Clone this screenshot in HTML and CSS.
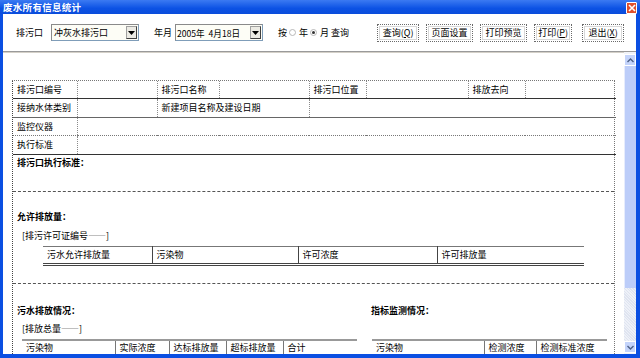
FILE: index.html
```html
<!DOCTYPE html>
<html lang="zh">
<head>
    <meta charset="UTF-8">
    <title>废水所有信息统计</title>
    <link rel="stylesheet" href="styles.css">
</head>
<body>
<div class="window">
    <div class="titlebar">
        <span class="title">废水所有信息统计</span>
        <span class="close">
            <svg width="8" height="8" viewBox="0 0 8 8"><path d="M1 1L7 7M7 1L1 7" stroke="#fff" stroke-width="1.6"/></svg>
        </span>
    </div>

    <div class="toolbar">
        <span class="lbl">排污口</span>
        <div class="combo outlet">
            <span class="val">冲灰水排污口</span>
            <span class="drop"><svg width="7" height="4" viewBox="0 0 7 4"><path d="M0 0H7L3.5 4Z" fill="#000"/></svg></span>
        </div>
        <span class="lbl ym">年月</span>
        <div class="combo date">
            <span class="val">2005年&nbsp; 4月18日</span>
            <span class="drop"><svg width="7" height="4" viewBox="0 0 7 4"><path d="M0 0H7L3.5 4Z" fill="#000"/></svg></span>
        </div>
        <span class="by">按<span class="radio"></span>年<span class="radio on"></span>月&nbsp;查询</span>
        <div class="buttons">
            <span class="btn b-query">查询(<u>Q</u>)</span>
            <span class="btn b-wide">页面设置</span>
            <span class="btn b-wide">打印预览</span>
            <span class="btn b-print">打印(<u>P</u>)</span>
            <span class="btn b-exit">退出(<u>X</u>)</span>
        </div>
    </div>

    <div class="content">
        <div class="report">
            <table class="info">
                <colgroup>
                    <col style="width:64px"><col style="width:80px"><col style="width:62px"><col style="width:90px">
                    <col style="width:57px"><col style="width:102px"><col style="width:57px"><col style="width:91px">
                </colgroup>
                <tr class="r1">
                    <td>排污口编号</td><td></td><td>排污口名称</td><td></td>
                    <td>排污口位置</td><td></td><td>排放去向</td><td></td>
                </tr>
                <tr class="r2">
                    <td>接纳水体类别</td><td></td><td colspan="2">新建项目名称及建设日期</td><td colspan="4"></td>
                </tr>
                <tr class="r3">
                    <td>监控仪器</td><td colspan="7"></td>
                </tr>
                <tr class="r4">
                    <td>执行标准</td><td colspan="7"></td>
                </tr>
            </table>

            <div class="section s-std">
                <h3>排污口执行标准：</h3>
            </div>

            <div class="section s-allow">
                <h3>允许排放量：</h3>
                <p class="note">[排污许可证编号——]</p>
                <table class="sub allow">
                    <colgroup><col style="width:109px"><col style="width:146px"><col style="width:139px"><col style="width:147px"></colgroup>
                    <tr><td>污水允许排放量</td><td>污染物</td><td>许可浓度</td><td>许可排放量</td></tr>
                </table>
            </div>

            <div class="section s-out">
                <div class="half left">
                    <h3>污水排放情况：</h3>
                    <p class="note">[排放总量——]</p>
                    <table class="sub discharge">
                        <colgroup><col style="width:93px"><col style="width:54px"><col style="width:57px"><col style="width:57px"><col style="width:74px"></colgroup>
                        <tr><td>污染物</td><td>实际浓度</td><td>达标排放量</td><td>超标排放量</td><td>合计</td></tr>
                    </table>
                </div>
                <div class="half right">
                    <h3>指标监测情况：</h3>
                    <table class="sub monitor">
                        <colgroup><col style="width:112px"><col style="width:52px"><col style="width:71px"></colgroup>
                        <tr><td>污染物</td><td>检测浓度</td><td>检测标准浓度</td></tr>
                    </table>
                </div>
            </div>
        </div>

        <div class="scrollbar">
            <span class="sb-btn"><svg width="7" height="5" viewBox="0 0 7 5"><path d="M0.5 4L3.5 1L6.5 4" fill="none" stroke="#4d6185" stroke-width="1.4"/></svg></span>
            <span class="sb-thumb"></span>
            <span class="sb-track"></span>
            <span class="sb-btn"><svg width="7" height="5" viewBox="0 0 7 5"><path d="M0.5 1L3.5 4L6.5 1" fill="none" stroke="#4d6185" stroke-width="1.4"/></svg></span>
        </div>
    </div>
</div>
</body>
</html>
```

FILE: styles.css
```css
html, body {
    margin: 0;
    padding: 0;
    background: #fff;
}

.window {
    width: 640px;
    height: 358px;
    box-sizing: border-box;
    background: #0b4fe2;
    padding: 0 4px 4px 3px;
    display: flex;
    flex-direction: column;
    font-family: "Noto Sans CJK SC", "Liberation Sans", sans-serif;
    font-size: 9px;
    color: #000;
    overflow: hidden;
}

/* title bar */
.titlebar {
    height: 14px;
    margin: 0 -4px 0 -3px;
    padding: 0 3px 0 3px;
    display: flex;
    align-items: center;
    justify-content: space-between;
    background: linear-gradient(#3b7af2, #0c52e4 60%, #0a4cdb);
}
.title {
    color: #fff;
    font-weight: bold;
    font-size: 9.5px;
    line-height: 14px;
    letter-spacing: 0.3px;
}
.close {
    width: 9px;
    height: 10px;
    margin-top: 2px;
    background: #e0502c;
    border: 1px solid #fff;
    border-radius: 1px;
    display: flex;
    align-items: center;
    justify-content: center;
}

/* toolbar */
.toolbar {
    height: 37px;
    background: #fff;
    display: flex;
    align-items: center;
    padding-left: 13px;
    white-space: nowrap;
    line-height: 12px;
}
.lbl {
    margin-right: 8px;
}
.lbl.ym {
    margin-left: 15px;
    margin-right: 3px;
}
.combo {
    height: 17px;
    box-sizing: border-box;
    border: 1px solid #7f9db9;
    border-top-color: #8a8a8a;
    border-left-color: #8a8a8a;
    display: flex;
    align-items: center;
    justify-content: space-between;
    background: #fdfdf6;
}
.combo.outlet {
    width: 88px;
}
.combo.date {
    width: 88px;
}
.combo .val {
    padding-left: 2px;
}
.combo.date .val {
    padding-left: 1px;
    font-size: 8.6px;
}
.combo .drop {
    width: 11px;
    height: 13px;
    margin-right: 1px;
    box-sizing: border-box;
    border: 1px solid #a0a0a0;
    border-right-color: #404040;
    border-bottom-color: #404040;
    background: #ecebe4;
    display: flex;
    align-items: center;
    justify-content: center;
}
.by {
    margin-left: 15px;
    display: flex;
    align-items: center;
}
.radio {
    width: 7px;
    height: 7px;
    border: 1px solid #b8b8b8;
    border-radius: 50%;
    margin: 0 3px 0 2px;
    box-sizing: border-box;
    position: relative;
}
.radio.on::after {
    content: "";
    position: absolute;
    left: 1px;
    top: 1px;
    width: 3px;
    height: 3px;
    border-radius: 50%;
    background: #333;
}
.buttons {
    display: flex;
    margin-left: 28px;
}
.btn {
    height: 18px;
    box-sizing: border-box;
    border: 1px dotted #6a6a6a;
    outline: 1px solid #d8d8d8;
    outline-offset: -3px;
    display: flex;
    align-items: center;
    justify-content: center;
    margin-right: 7px;
    background: #fff;
}
.btn u {
    text-decoration: underline;
}
.b-query { width: 42px; }
.b-wide { width: 47px; }
.b-print { width: 38px; margin-right: 10px; }
.b-exit { width: 42px; }

/* content */
.content {
    flex: 1;
    display: flex;
    background: #fff;
    border-top: 1px solid #9a9a9a;
    box-shadow: inset 0 1px 0 #d4d0c8;
    overflow: hidden;
}
.report {
    width: 603px;
    margin: 28px 0 0 9px;
    border-left: 1px dotted #444;
    border-right: 1px dotted #777;
    border-top: 1px dotted #777;
    box-sizing: border-box;
    flex: none;
}

.info {
    border-collapse: collapse;
    table-layout: fixed;
    width: 601px;
    line-height: 12px;
}
.info td {
    padding: 0 0 0 4px;
    border-left: 1px dotted #8a8a8a;
    border-bottom: 1px solid #333;
    white-space: nowrap;
    overflow: hidden;
}
.info td:first-child {
    border-left: none;
}
.info .r1 td { height: 17px; }
.info .r2 td { height: 18px; border-bottom-color: #666; }
.info .r3 td { height: 17px; border-bottom: 1px dotted #777; }
.info .r4 td { height: 18px; }

.section {
    border-bottom: 1px dashed #555;
    box-sizing: border-box;
}
.section h3 {
    margin: 0;
    font-size: 9px;
    line-height: 12px;
    font-weight: bold;
    padding-left: 4px;
}
.s-std {
    height: 37px;
    padding-top: 2px;
}
.s-allow {
    height: 92px;
    padding-top: 19px;
}
.note {
    margin: 7px 0 0 9px;
    line-height: 12px;
}
.sub {
    border-collapse: collapse;
    table-layout: fixed;
    line-height: 12px;
}
.sub td {
    padding: 0 0 0 4px;
    border-left: 1px solid #444;
    white-space: nowrap;
    overflow: hidden;
}
.sub td:first-child {
    border-left: none;
}
.allow {
    margin: 4px 0 0 30px;
    width: 541px;
    border-top: 1px solid #777;
    border-bottom: 3px double #444;
}
.allow td {
    height: 16px;
}

.s-out {
    border-bottom: none;
    display: flex;
    padding-top: 21px;
}
.half.left {
    width: 354px;
}
.half.left .note {
    margin-top: 6px;
}
.discharge {
    margin: 4px 0 0 9px;
    width: 335px;
    border-top: 2px solid #999;
}
.discharge td, .monitor td {
    height: 14px;
    border-left-color: #777;
}
.monitor {
    margin: 22px 0 0 5px;
    width: 235px;
    border-top: 2px solid #999;
}

/* scrollbar */
.scrollbar {
    width: 12px;
    margin-left: auto;
    display: flex;
    flex-direction: column;
    background: #f1f3f9;
}
.sb-btn {
    height: 12px;
    flex: none;
    background: #c4d4fb;
    border: 1px solid #fff;
    box-sizing: border-box;
    display: flex;
    align-items: center;
    justify-content: center;
    margin-top: 2px;
}
.sb-btn:last-child {
    margin-top: 0;
    margin-bottom: 1px;
}
.sb-thumb {
    height: 222px;
    flex: none;
    background: #bccdf9;
    border-left: 1px solid #e6ecfd;
    box-sizing: border-box;
}
.sb-track {
    flex: 1;
    background: repeating-linear-gradient(45deg, #eef1f8 0 1px, #dfe4f0 1px 2px);
}
```
